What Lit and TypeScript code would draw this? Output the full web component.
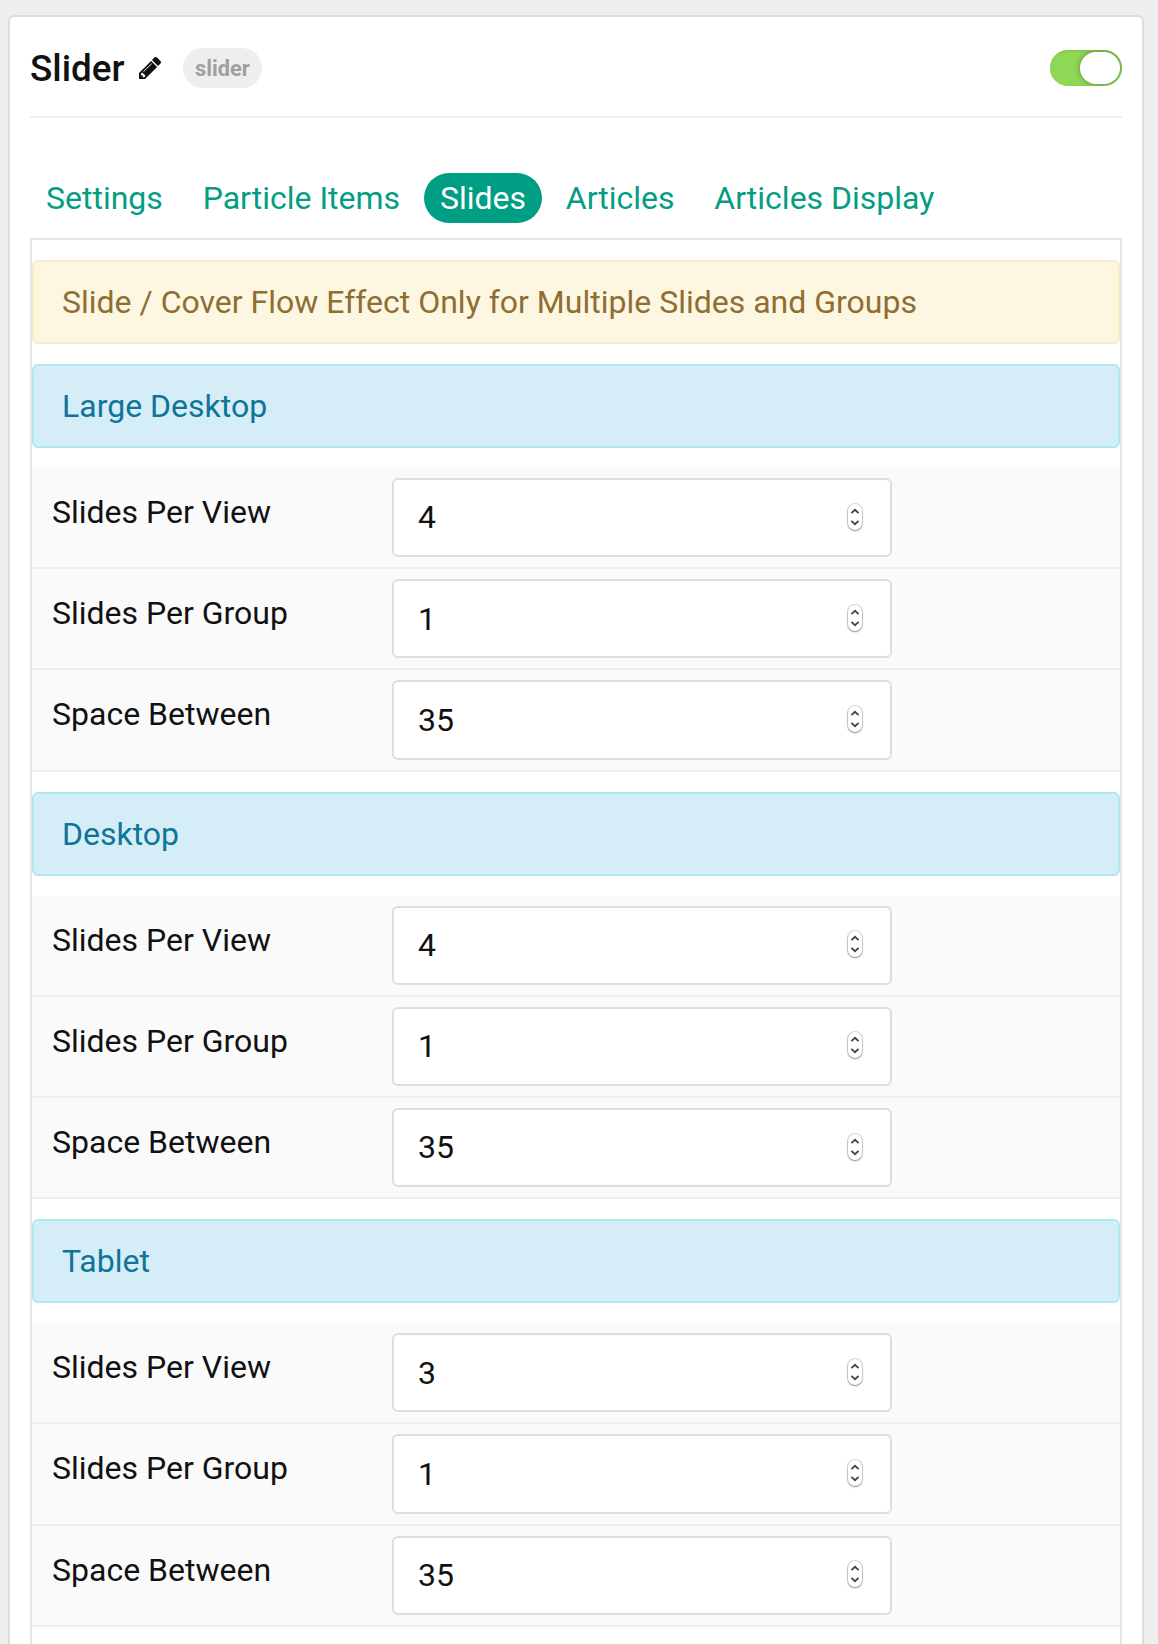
import { LitElement, html, css } from "lit";
import { customElement, property, state } from "lit/decorators.js";
import { classMap } from "lit/directives/class-map.js";

interface Field {
  label: string;
  value: number;
}

interface Group {
  title: string;
  fields: Field[];
}

const group = (title: string, view: number, perGroup: number, space: number): Group => ({
  title,
  fields: [
    { label: "Slides Per View", value: view },
    { label: "Slides Per Group", value: perGroup },
    { label: "Space Between", value: space },
  ],
});

const GROUPS: Group[] = [
  group("Large Desktop", 4, 1, 35),
  group("Desktop", 4, 1, 35),
  group("Tablet", 3, 1, 35),
];

const TABS = ["Settings", "Particle Items", "Slides", "Articles", "Articles Display"];

@customElement("number-field")
export class NumberField extends LitElement {
  @property({ type: Number }) value = 0;
  @property() label = "";

  static styles = css`
    :host {
      display: flex;
      align-items: center;
      box-sizing: border-box;
      width: 500px;
      height: 79.2px;
      padding: 0 27px 0.4px 24px;
      border: 2px solid #ddd;
      border-radius: 6px;
      background: #fff;
    }
    .input {
      flex: 1;
      min-width: 0;
      height: 48px;
      margin: 0;
      padding: 0;
      border: 0;
      outline: 0;
      background: transparent;
      color: #111;
      font: 400 32px/48px Roboto, sans-serif;
      appearance: textfield;
      -moz-appearance: textfield;
    }
    .input::-webkit-inner-spin-button,
    .input::-webkit-outer-spin-button {
      appearance: none;
      margin: 0;
    }
    .stepper {
      display: block;
      width: 14px;
      height: 26px;
      margin: 0 1px 1.4px 0;
      border-radius: 7px;
      background: #fff;
      box-shadow: 0 0 0 1px rgba(0, 0, 0, 0.14), 0 1px 2px rgba(0, 0, 0, 0.36);
    }
  `;

  render() {
    return html`
      <input class="input" type="number" aria-label=${this.label} .value=${String(this.value)} />
      <svg class="stepper" viewBox="0 0 14 26" fill="none" stroke="#444" stroke-width="1.8">
        <path d="M3.4 9.2 7 5.8l3.6 3.4M3.4 16.8 7 20.2l3.6-3.4" />
      </svg>
    `;
  }
}

@customElement("app-root")
export class AppRoot extends LitElement {
  @state() private activeTab = "Slides";
  @state() private enabled = true;

  static styles = css`
    :host {
      display: flex;
      flex-direction: column;
      box-sizing: border-box;
      height: 1644px;
      padding: 15px 14px 0 8px;
      overflow: hidden;
      background: #efefef;
      color: #111;
      font: 400 32px/48px Roboto, sans-serif;
    }
    .card {
      flex: none;
      box-sizing: border-box;
      height: 1680px;
      padding: 0 20px;
      border: 2px solid #ddd;
      border-radius: 6px;
      background: #fff;
    }
    .header {
      display: flex;
      align-items: center;
      box-sizing: border-box;
      height: 101px;
      padding-top: 3px;
      border-bottom: 2px solid #eee;
    }
    .title {
      margin: 0 14px 0 0;
      padding-top: 2px;
      font-size: 36.8px;
      font-weight: 500;
      line-height: 48px;
    }
    .pencil {
      width: 22px;
      height: 22px;
      margin-right: 22.5px;
    }
    .badge {
      box-sizing: border-box;
      height: 40px;
      padding: 0 12px;
      border-radius: 20px;
      background: #eee;
      color: #9f9f9f;
      font-size: 21.76px;
      font-weight: 700;
      line-height: 42px;
    }
    .toggle {
      display: flex;
      justify-content: flex-start;
      box-sizing: border-box;
      width: 72px;
      height: 36px;
      margin: 0 0 0 auto;
      padding: 2px;
      overflow: hidden;
      border: 0;
      border-radius: 18px;
      background: #ccc;
    }
    .toggle.on {
      justify-content: flex-end;
      background: #8fd856;
      box-shadow: inset 0 1px 3px rgba(0, 0, 0, 0.12);
    }
    .knob {
      width: 40px;
      height: 32px;
      border-radius: 16px;
      background: #fff;
      box-shadow: 0 0 6px rgba(0, 0, 0, 0.34);
    }
    .tabs {
      display: flex;
      gap: 7.8px;
      margin: 55px 0 15px;
    }
    .tab {
      height: 50px;
      padding: 0 16px;
      border: 0;
      border-radius: 25px;
      background: transparent;
      color: #049d83;
      font: inherit;
      line-height: 50px;
      white-space: nowrap;
    }
    .tab.active {
      background: #009e84;
      color: #fff;
    }
    .panel {
      height: 1500px;
      border: 2px solid #e5e5e5;
    }
    .alert {
      box-sizing: border-box;
      height: 84px;
      margin: 20px 0;
      padding: 16px 28px;
      border: 2px solid;
      border-radius: 6px;
    }
    .warning {
      border-color: #fceac6;
      background: #fdf7e1;
      color: #8f6d33;
    }
    .info {
      border-color: #aee8f3;
      background: #d4edf7;
      color: #0f7598;
    }
    .row {
      display: grid;
      grid-template-columns: 340px 500px;
      box-sizing: border-box;
      height: 101.2px;
      padding: 10px 20px;
      border-bottom: 2px solid #eee;
      background: #fafafa;
    }
    .label {
      padding-top: 10px;
    }
  `;

  render() {
    return html`
      <section class="card">
        <header class="header">
          <h1 class="title">Slider</h1>
          <svg class="pencil" viewBox="0 149 1515 1515" fill="#111">
            <path
              d="M363 1536l91-91-235-235-91 91v107h128v128h107zm523-928q0-22-22-22-10 0-17 7l-542 542q-7 7-7 17 0 22 22 22 10 0 17-7l542-542q7-7 7-17zm-54-192l416 416-832 832h-416v-416zm683 96q0 53-37 90l-166 166-416-416 166-165q36-38 90-38 53 0 91 38l235 234q37 39 37 91z"
            />
          </svg>
          <span class="badge">slider</span>
          <button
            class=${classMap({ toggle: true, on: this.enabled })}
            role="switch"
            aria-checked=${this.enabled}
            @click=${() => (this.enabled = !this.enabled)}
          >
            <span class="knob"></span>
          </button>
        </header>
        <nav class="tabs">
          ${TABS.map(
            (t) => html`<button
              class=${classMap({ tab: true, active: t === this.activeTab })}
              @click=${() => (this.activeTab = t)}
            >${t}</button>`
          )}
        </nav>
        <div class="panel">
          <div class="alert warning">Slide / Cover Flow Effect Only for Multiple Slides and Groups</div>
          ${GROUPS.map(
            (g) => html`
              <div class="alert info">${g.title}</div>
              ${g.fields.map(
                (f) => html`<div class="row">
                  <span class="label">${f.label}</span>
                  <number-field .label=${f.label} .value=${f.value}></number-field>
                </div>`
              )}
            `
          )}
        </div>
      </section>
    `;
  }
}
